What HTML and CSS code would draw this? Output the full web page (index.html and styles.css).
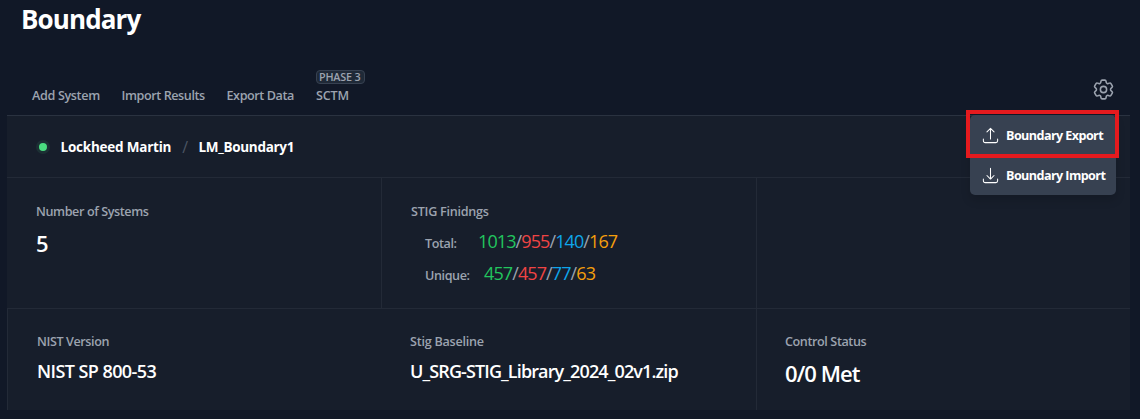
FILE: index.html
```html
<!DOCTYPE html>
<html lang="en">
<head>
<meta charset="utf-8">
<title>Boundary</title>
<link rel="stylesheet" href="styles.css">
</head>
<body>
<h1 class="title"><span>Boundary</span></h1>
<main class="panel">
  <nav class="nav">
    <a class="n1">Add System</a>
    <a class="n2">Import Results</a>
    <a class="n3">Export Data</a>
    <a class="n4"><span class="badge">PHASE 3</span><span class="sctm">SCTM</span></a>
    <div class="settings">
      <svg class="gear" viewBox="0 0 24 24"><path d="M9.594 3.94c.09-.542.56-.94 1.11-.94h2.593c.55 0 1.02.398 1.11.94l.213 1.281c.063.374.313.686.645.87.074.04.147.083.22.127.325.196.72.257 1.075.124l1.217-.456a1.125 1.125 0 0 1 1.37.49l1.296 2.247a1.125 1.125 0 0 1-.26 1.431l-1.003.827c-.293.241-.438.613-.43.992a7.723 7.723 0 0 1 0 .255c-.008.378.137.75.43.991l1.004.827c.424.35.534.955.26 1.43l-1.298 2.247a1.125 1.125 0 0 1-1.369.491l-1.217-.456c-.355-.133-.75-.072-1.076.124a6.47 6.47 0 0 1-.22.128c-.331.183-.581.495-.644.869l-.213 1.281c-.09.543-.56.94-1.11.94h-2.594c-.55 0-1.019-.398-1.11-.94l-.213-1.281c-.062-.374-.312-.686-.644-.87a6.52 6.52 0 0 1-.22-.127c-.325-.196-.72-.257-1.076-.124l-1.217.456a1.125 1.125 0 0 1-1.369-.49l-1.297-2.247a1.125 1.125 0 0 1 .26-1.431l1.004-.827c.292-.24.437-.613.43-.991a6.932 6.932 0 0 1 0-.255c.007-.38-.138-.751-.43-.992l-1.004-.827a1.125 1.125 0 0 1-.26-1.43l1.297-2.247a1.125 1.125 0 0 1 1.37-.491l1.216.456c.356.133.751.072 1.076-.124.072-.044.146-.086.22-.128.332-.183.582-.495.644-.869l.214-1.28Z"/><path d="M15 12a3 3 0 1 1-6 0 3 3 0 0 1 6 0Z"/></svg>
      <div class="menu">
        <div class="item"><svg viewBox="0 0 24 24"><path d="M3 16.5v2.25A2.25 2.25 0 0 0 5.25 21h13.5A2.25 2.25 0 0 0 21 18.75V16.5m-13.5-9L12 3m0 0 4.500 4.500M12 3v13.500"/></svg><span class="m1">Boundary Export</span></div>
        <div class="item"><svg viewBox="0 0 24 24"><path d="M3 16.5v2.25A2.25 2.25 0 0 0 5.25 21h13.5A2.25 2.25 0 0 0 21 18.75V16.5M16.5 12 12 16.5m0 0L7.500 12m4.500 4.500V3"/></svg><span class="m2">Boundary Import</span></div>
        <div class="highlight"></div>
      </div>
    </div>
  </nav>
  <header class="crumbs">
    <span class="status"></span><span class="c1">Lockheed Martin</span><span class="slash">/</span><span class="c2">LM_Boundary1</span>
  </header>
  <section class="stats">
    <div class="cell"><span class="label l1">Number of Systems</span><strong class="big five">5</strong></div>
    <div class="cell split"><span class="label l2">STIG Finidngs</span>
      <div class="counts"><span class="label l3">Total:</span><span class="nums u1"><i class="green">1013</i>/<i class="red">955</i>/<i class="blue">140</i>/<i class="amber">167</i></span></div>
      <div class="counts"><span class="label l4">Unique:</span><span class="nums u2"><i class="green">457</i>/<i class="red">457</i>/<i class="blue">77</i>/<i class="amber">63</i></span></div>
    </div>
    <div class="cell split"></div>
  </section>
  <section class="stats lower">
    <div class="cell split"><span class="label l5">NIST Version</span><strong class="value v1">NIST SP 800-53</strong></div>
    <div class="cell baseline"><span class="label l6">Stig Baseline</span><strong class="value v2">U_SRG-STIG_Library_2024_02v1.zip</strong></div>
    <div class="cell split control"><span class="label l7">Control Status</span><strong class="big met">0/0 Met</strong></div>
  </section>
</main>
</body>
</html>
```
FILE: styles.css
```css
* { box-sizing: border-box; }
body { margin: 0; height: 419px; overflow: hidden; background: #111827; color: #fff; font: 600 12.6px/20px "Open Sans", "Noto Sans", sans-serif; white-space: nowrap; }
.title { margin: 0; padding: 0 0 0 21px; height: 60px; font-size: 26px; line-height: 38px; font-weight: 700; letter-spacing: -0.9px; }
.panel { width: 1123px; margin-left: 7px; }
.nav { display: flex; height: 55px; padding: 0 0 9px 25px; align-items: flex-end; color: #9ca3af; letter-spacing: -0.35px; }
.n1 { width: 89.500px; }
.n2 { width: 105px; letter-spacing: -0.42px; }
.n3 { width: 89.500px; letter-spacing: -0.42px; }
.n4 { display: flex; flex-direction: column; }
.sctm { letter-spacing: -0.15px; }
.badge { height: 14px; width: 49px; margin-bottom: 2px; padding-left: 2px; border: 1px solid #374151; border-radius: 4px; background: #1f2937; font-size: 10.800px; line-height: 12px; letter-spacing: -0.2px; }
.settings { position: relative; margin-left: auto; width: 39px; height: 32px; }
.gear { width: 25px; height: 25px; display: block; margin-top: 3px; }
svg { fill: none; stroke: currentColor; stroke-width: 1.500; stroke-linecap: round; stroke-linejoin: round; }
.menu { position: absolute; top: 41px; right: 14px; width: 146px; height: 80px; border-radius: 5px; background: #374151; color: #fff; box-shadow: 0 5px 10px rgba(0,0,0,.15); }
.item { display: flex; align-items: center; gap: 6px; height: 40px; padding-left: 11px; font-weight: 700; letter-spacing: -0.58px; }
.item span { padding-top: 1px; }
.item svg { width: 19px; height: 19px; stroke-width: 1.300; }
.highlight { position: absolute; left: -4px; top: -5px; width: 153px; height: 48px; border: 4px solid #e51a1e; }
.crumbs { display: flex; align-items: center; height: 62px; padding: 1px 0 0 28.500px; background: #171e2b; border-top: 1px solid #2a3240; font-size: 13.500px; font-weight: 700; letter-spacing: -0.22px; }
.status { width: 14px; height: 14px; border: 3.500px solid #1c3034; border-radius: 50%; background: #4ade80; margin-right: 11px; }
.slash { color: #4b5563; font-weight: 400; font-size: 16px; margin: 0 10.500px 0 11px; }
.c2 { letter-spacing: -0.3px; }
.stats { display: grid; grid-template-columns: 374px 375px 374px; height: 131px; background: #171e2b; border-top: 1px solid #232a37; }
.lower { height: 102px; }
.cell { display: flex; flex-direction: column; align-items: flex-start; padding: 24px 0 0 29px; }
.split { border-left: 1px solid #232a37; }
.lower .cell { padding-top: 23px; }
.lower .control { padding-left: 28px; }
.label { color: #9ca3af; letter-spacing: -0.4px; }
.l2, .l6 { letter-spacing: -0.25px; }
.big { font-size: 22px; line-height: 30px; font-weight: 600; letter-spacing: -0.95px; }
.five { margin-top: 6px; }
.met { margin-top: 6px; }
.value { font-size: 18px; line-height: 28px; font-weight: 600; letter-spacing: -0.57px; margin-top: 5px; }
.v2 { letter-spacing: -0.88px; }
.counts { display: flex; align-items: baseline; height: 32px; padding-left: 14px; line-height: 32px; }
.split .l2 { margin-bottom: 3px; }
.l3 { width: 53px; }
.l4 { width: 59px; }
.nums { font-size: 18px; font-weight: 400; color: #9ca3af; letter-spacing: -0.9px; }
.nums i { font-style: normal; }
.green { color: #22c55e; }
.red { color: #ef4444; }
.blue { color: #0ea5e9; }
.amber { color: #f59e0b; }
```
